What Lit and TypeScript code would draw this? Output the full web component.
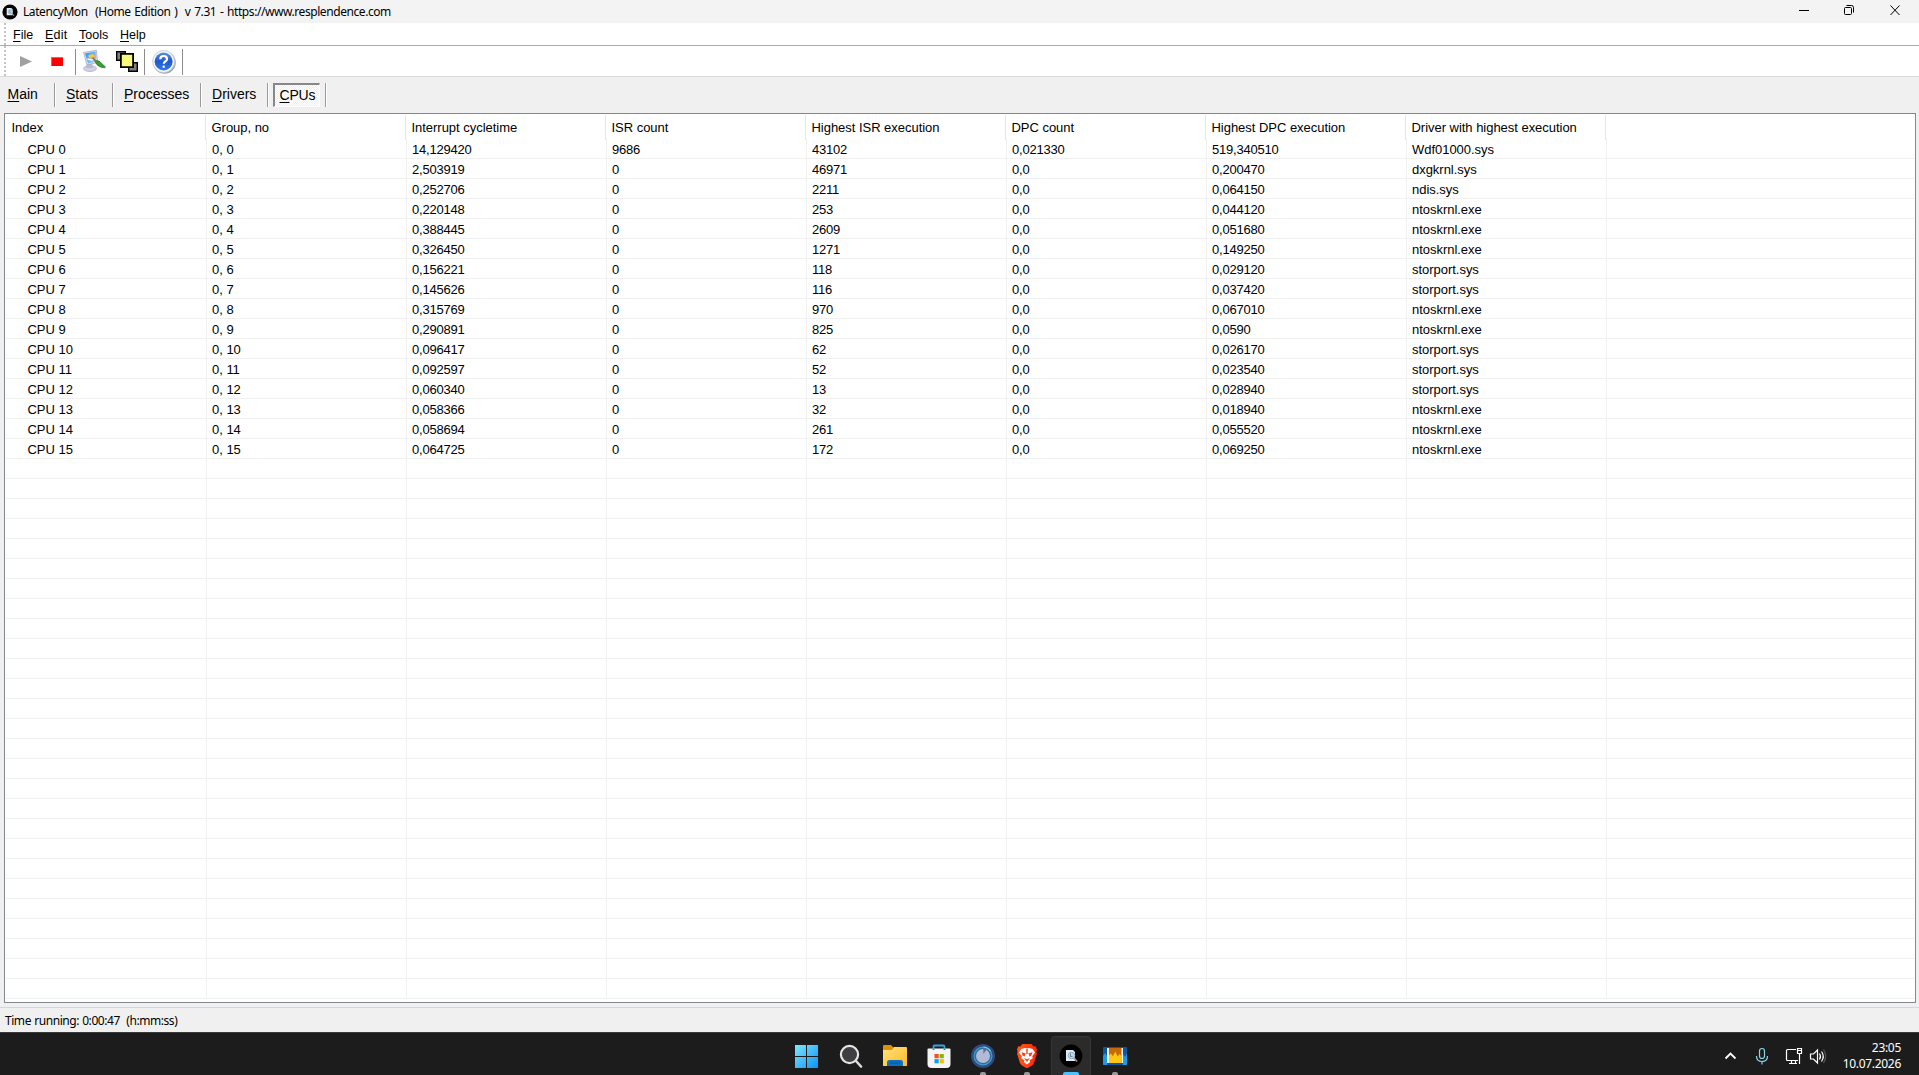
import { LitElement, html, css, svg } from "lit";
import { customElement } from "lit/decorators.js";

const COLUMNS = ["Index", "Group, no", "Interrupt cycletime", "ISR count", "Highest ISR execution", "DPC count", "Highest DPC execution", "Driver with highest execution"];

const ROWS = [
  ["14,129420", "9686", "43102", "0,021330", "519,340510", "Wdf01000.sys"],
  ["2,503919", "0", "46971", "0,0", "0,200470", "dxgkrnl.sys"],
  ["0,252706", "0", "2211", "0,0", "0,064150", "ndis.sys"],
  ["0,220148", "0", "253", "0,0", "0,044120", "ntoskrnl.exe"],
  ["0,388445", "0", "2609", "0,0", "0,051680", "ntoskrnl.exe"],
  ["0,326450", "0", "1271", "0,0", "0,149250", "ntoskrnl.exe"],
  ["0,156221", "0", "118", "0,0", "0,029120", "storport.sys"],
  ["0,145626", "0", "116", "0,0", "0,037420", "storport.sys"],
  ["0,315769", "0", "970", "0,0", "0,067010", "ntoskrnl.exe"],
  ["0,290891", "0", "825", "0,0", "0,0590", "ntoskrnl.exe"],
  ["0,096417", "0", "62", "0,0", "0,026170", "storport.sys"],
  ["0,092597", "0", "52", "0,0", "0,023540", "storport.sys"],
  ["0,060340", "0", "13", "0,0", "0,028940", "storport.sys"],
  ["0,058366", "0", "32", "0,0", "0,018940", "ntoskrnl.exe"],
  ["0,058694", "0", "261", "0,0", "0,055520", "ntoskrnl.exe"],
  ["0,064725", "0", "172", "0,0", "0,069250", "ntoskrnl.exe"],
];

const BLANK_ROWS = 27;

const appGlyph = svg`
  <circle cx="12" cy="12" r="11.4" fill="#000"/>
  <path d="M7 6h7l2 2v9H7z" fill="#dfeaf3"/>
  <circle cx="12.500" cy="11.500" r="3.300" fill="#b9d8ea" stroke="#7fa3bb" stroke-width=".8"/>
  <path d="M11.500 9.500v3h2" stroke="#5f7583" stroke-width=".8" fill="none"/>
  <path d="M15 14l3 3.600" stroke="#b78f74" stroke-width="1.600"/>`;

const startIcon = html`<svg width="24" height="24" viewBox="0 0 24 24">
  <defs><linearGradient id="w" x1="0" y1="0" x2="24" y2="24" gradientUnits="userSpaceOnUse"><stop stop-color="#7fe9ff"/><stop offset="1" stop-color="#0a90f5"/></linearGradient></defs>
  <path fill="url(#w)" d="M0 1h11v11h-11zM12 1h11v11h-11zM0 13h11v11h-11zM12 13h11v11h-11z"/></svg>`;

const searchIcon = html`<svg width="24" height="24" viewBox="0 0 24 24">
  <circle cx="10.500" cy="10.500" r="8.600" fill="#3d3f42" stroke="#e4e4e4" stroke-width="2.200"/>
  <path d="M17 17l5 5.500" stroke="#dcdcdc" stroke-width="2.600" stroke-linecap="round"/></svg>`;

const folderIcon = html`<svg width="24" height="24" viewBox="0 0 24 24">
  <defs><linearGradient id="f" x1="0" y1="0" x2="1" y2="1"><stop stop-color="#ffe27c"/><stop offset="1" stop-color="#fcb924"/></linearGradient></defs>
  <path d="M0 2q0-1 1-1h7l2.500 2.500H15V9H0z" fill="#d9930b"/>
  <path d="M0 6h9l2-3h12q1 0 1 1v18H0z" fill="url(#f)"/>
  <path d="M4 22v-3.500q0-2.500 2.500-2.500h11q2.500 0 2.500 2.500V22z" fill="#0f6fc0"/><path d="M7 19h10" stroke="#0a5aa0" stroke-width="1.200"/></svg>`;

const storeIcon = html`<svg width="24" height="24" viewBox="0 0 24 24">
  <path d="M6.500 6V2.700q0-1.200 1.200-1.200h8.600q1.200 0 1.200 1.200V6" fill="none" stroke="#2aa7ea" stroke-width="1.800"/>
  <path d="M.5 5.500q0-1 1-1h21q1 0 1 1V20q0 4-4 4h-15q-4 0-4-4z" fill="#f4f4f4"/>
  <path d="M5.600 5.200h1.800M16.600 5.200h1.800" stroke="#1b7fc4" stroke-width="1.500"/>
  <path d="M7.500 10h4.200v4.200H7.500z" fill="#f25022"/><path d="M12.600 10h4.200v4.200h-4.200z" fill="#7fba00"/>
  <path d="M7.500 15.100h4.200v4.200H7.500z" fill="#00a4ef"/><path d="M12.600 15.100h4.200v4.200h-4.200z" fill="#ffb900"/></svg>`;

const orbIcon = html`<svg width="24" height="24" viewBox="0 0 24 24">
  <circle cx="12" cy="12" r="12" fill="#2f4a80"/><circle cx="12" cy="12" r="8.900" fill="#38659a" stroke="#3ba0c6" stroke-width="1.200"/>
  <circle cx="12" cy="12" r="7" fill="#b1bbd5"/><path d="M12.300 4v6l3.700-5z" fill="#4b74ab"/>
  <path d="M12.500 3.200a8.700 8.700 0 0 1 7 4" fill="none" stroke="#6ccbe0" stroke-width="1.200"/></svg>`;

const braveIcon = html`<svg width="24" height="24" viewBox="0 0 24 24">
  <defs><linearGradient id="b"><stop stop-color="#ff5a1f"/><stop offset="1" stop-color="#ff2408"/></linearGradient></defs>
  <path fill="url(#b)" d="M7.500 0h9l2.200 2.500 2-.2L22 5.500l-.6 2 .5 2.200L19 19q-.6 1.500-2 2.400L12 24.500l-5-3.100Q5.600 20.500 5 19L2.100 9.700l.5-2.200-.6-2 1.300-3.200 2 .2z"/>
  <path fill="#fff" d="M12 4.500l2-.5 3.700 1L20 8.500l-2.800 3.800.6 2-3.300 2 .7 1.700L12 20.500 8.800 18l.7-1.700-3.300-2 .6-2L4 8.500 6.300 5 10 4z"/>
  <path fill="#ff3f14" d="M6.500 8.200l4 1-.8 3.300-2-.8zM17.500 8.200l-4 1 .8 3.300 2-.8zM9 14l3 1.200 3-1.200-3 4zM11.300 5h1.400v5h-1.400z"/></svg>`;

const chartIcon = html`<svg width="24" height="24" viewBox="0 0 24 24">
  <path d="M0 4q0-1 1-1h22q1 0 1 1v16q0 1-1 1H1q-1 0-1-1z" fill="#0b57a3"/>
  <path d="M0 12l2-3 2 3v9H1q-1 0-1-1zM24 9l-2 4-2-3v11h3q1 0 1-1z" fill="#1b9be6"/>
  <path d="M4 4h16v15H4z" fill="#f1f4f6"/><path d="M6 4h12.500v15H6z" fill="#c96a08"/>
  <path d="M6 19v-7.500l1.500-2 1 1L10 12l2.300-4.500 2.200 5 2-2.500 2 2v7z" fill="#ffc713"/></svg>`;

const APPS = [
  { icon: startIcon, running: false },
  { icon: searchIcon, running: false },
  { icon: folderIcon, running: false },
  { icon: storeIcon, running: false },
  { icon: orbIcon, running: true },
  { icon: braveIcon, running: true },
  { icon: html`<svg width="24" height="24" viewBox="0 0 24 24">${appGlyph}</svg>`, running: true, active: true },
  { icon: chartIcon, running: true },
];

@customElement("app-root")
export class AppRoot extends LitElement {
  static styles = css`
    :host { display: flex; flex-direction: column; width: 1919px; height: 1075px; overflow: hidden; background: #f0f0f0; color: #000; font: 12.500px/20px "Liberation Sans", Arial, sans-serif; }
    * { box-sizing: border-box; }
    svg { display: block; flex: none; }
    u { text-underline-offset: 2px; text-decoration-thickness: 1px; text-decoration-skip-ink: none; }
    .title { height: 23px; background: #f3f3f3; display: flex; align-items: center; padding-left: 2px; font: 12px/23px "Noto Sans", sans-serif; letter-spacing: -.43px; word-spacing: 1px; }
    .caption { margin-left: 5px; white-space: pre; flex: 1; }
    .win { margin-right: 18px; }
    .bars { background: #fff; height: 54px; border-bottom: 1px solid #dadada; display: flex; flex-direction: column; }
    .menu { height: 23px; border-bottom: 1px solid #a9abb0; display: flex; padding-left: 4px; line-height: 24px; }
    .grip { width: 2px; margin-right: 7px; background: repeating-linear-gradient(#c4c4c4 0 2px, #fff 2px 4px); }
    .m0 { width: 32px; } .m1 { width: 34px; letter-spacing: .25px; } .m2 { width: 41px; }
    .tools { height: 30px; padding-left: 4px; display: flex; }
    .tabs { height: 36px; display: flex; font-size: 14px; line-height: 34px; }
    .tab { display: flex; padding-left: 11px; }
    .sep { width: 1px; height: 24px; background: #9a9a9a; margin-top: 6px; margin-left: auto; box-shadow: 1px 0 #fff; }
    .t0 { width: 55px; padding-left: 7.5px; }
    .t1 { width: 58px; }
    .t2 { width: 88px; }
    .t3 { width: 67px; }
    .on { margin: 6px 5px 0 5px; width: 47px; height: 24px; padding-left: 4.5px; line-height: 20px; letter-spacing: -.2px; border: 1px solid #fff; border-top: 2px solid #888; border-left: 2px solid #888; background: repeating-conic-gradient(#f0f0f0 0 25%, #fff 0 50%) 0 0 / 2px 2px; }
    .end { margin-left: 0; }
    .list { height: 890px; margin: 0 3px 0 4px; background: #fff; border: 1px solid #828790; padding: 1px; font-size: 13px; overflow: hidden; letter-spacing: -.03px; }
    .head, .row { display: grid; grid-template-columns: 200px repeat(7, 200px) 1fr; }
    .head { height: 24px; line-height: 25px; }
    .cell { padding-left: 5.5px; border-right: 1px solid #e5e5e5; white-space: pre; }
    .row { height: 20px; border-bottom: 1px solid #f0f0f0; grid-template-columns: 201px repeat(7, 200px) 1fr; }
    .row .cell { padding-left: 5px; border-right-color: #f0f0f0; line-height: 21px; height: 19px; }
    .row .num { letter-spacing: -.22px; }
    .row .cell:first-child { padding-left: 21.5px; }
    .cell:last-child, .row .cell:last-child { border-right: 0; }
    .stat { margin-top: 4px; height: 25px; border-top: 1px solid #d7d7d7; padding-left: 5px; font: 12px/25px "Noto Sans", sans-serif; letter-spacing: -.45px; word-spacing: .6px; white-space: pre; }
    .task { height: 43px; background: #1c1c1c; border-top: 1px solid #3a3a3a; display: flex; color: #fff; }
    .apps { display: flex; margin-left: 785px; }
    .app { width: 44px; height: 42px; display: flex; flex-direction: column; align-items: center; padding-top: 11px; }
    .dot { width: 6px; height: 3px; border-radius: 2px 2px 0 0; background: #999; margin-top: 4px; }
    .active { background: #2b2b2b; border-radius: 4px 4px 0 0; width: 40px; height: 39px; margin: 3px 2px 0; padding-top: 7px; border: 1px solid #363636; border-bottom: 0; }
    .active .dot { width: 16px; background: #4cc2ff; }
    .tray { margin-left: auto; display: flex; }
    .clock { width: 72px; margin-right: 18px; padding-top: 7px; text-align: right; font: 12px/16px "Noto Sans", sans-serif; letter-spacing: -.3px; }
  `;

  render() {
    return html`
      <div class="title">
        <svg width="16" height="16" viewBox="0 0 24 24">${appGlyph}</svg>
        <span class="caption">LatencyMon  (Home Edition )  v 7.31 - https://www.resplendence.com</span>
        <svg class="win" width="107" height="20" viewBox="0 0 107 20" fill="none" stroke="#000"><path d="M5 8.500h10"/><rect x="50.500" y="5.500" width="7" height="7" rx="1"/><path d="M52.500 3.500h5q2 0 2 2v5M96.500 3.500l9 9.500M105.500 3.500l-9 9.500"/></svg>
      </div>
      <div class="bars">
        <div class="menu">
          <div class="grip"></div>
          <span class="m0"><u>F</u>ile</span><span class="m1"><u>E</u>dit</span><span class="m2"><u>T</u>ools</span><span><u>H</u>elp</span>
        </div>
        <div class="tools">
          <div class="grip"></div>
          <svg width="175" height="30" viewBox="13 46 175 30">
            <defs>
              <linearGradient id="scr" x1="0" y1="0" x2="1" y2="1"><stop stop-color="#2f8fe6"/><stop offset="1" stop-color="#8fe0ff"/></linearGradient>
              <linearGradient id="hlp" x1="0" y1="0" x2="0" y2="1"><stop stop-color="#5a8fe6"/><stop offset=".5" stop-color="#2059cf"/><stop offset="1" stop-color="#2f7be8"/></linearGradient>
              <pattern id="chk" width="2" height="2" patternUnits="userSpaceOnUse"><path d="M0 0h2v2H0z" fill="#ffff10"/><path d="M0 0h1v1H0zM1 1h1v1H1z" fill="#ffff80"/></pattern>
            </defs>
            <path d="M20 56l12 5.500-12 5.500z" fill="#a0a0a0"/>
            <path d="M51 57h12v9H51z" fill="#9a8080"/><path d="M52 58h11v8H52z" fill="#f00"/>
            <path d="M75.500 49v26M144.500 49v26M182.500 49v26" stroke="#8c8c8c"/>
            <ellipse cx="90" cy="68.500" rx="6.500" ry="3" fill="#d2d2e4" stroke="#a6a6be" stroke-width=".7"/>
            <path d="M87 63h5l1 5h-7z" fill="#b9b9d0"/>
            <path d="M83.500 52.500l13-2.300 1 12.300-10.500 2.500z" fill="#dcdcea" stroke="#a2a2bd" stroke-width=".7"/>
            <path d="M85 53.500l10.500-2 .8 10-8.300 2z" fill="url(#scr)"/>
            <path d="M88 55.500l5-2 2 3-5 2.500z" fill="#f6c34c"/><path d="M87.500 59l4 1 3-1" stroke="#fff" fill="none" stroke-width="1.300"/>
            <path d="M95 60.500l4 .5 6.500 6-1 .8q-6-.3-8.500-4.300z" fill="#35a32b" stroke="#1d6d1b" stroke-width=".7"/><path d="M92.500 57.500l3.500 4" stroke="#b06a2c" stroke-width="1.600"/>
            <path d="M116.700 51.700h8.600v8.600h-8.600z" fill="#808080" stroke="#000" stroke-width="1.400"/>
            <path d="M128.700 62.700h8.600v8.600h-8.600z" fill="#808080" stroke="#000" stroke-width="1.400"/>
            <path d="M120.900 53.900h12.200v13.200h-12.200z" fill="url(#chk)" stroke="#000" stroke-width="1.800"/>
            <circle cx="164.500" cy="62.500" r="11.300" fill="#9fa3ad"/><circle cx="163.600" cy="61.500" r="11" fill="#f4f6fa" stroke="#bfc4cf" stroke-width=".8"/>
            <circle cx="163.600" cy="61.500" r="9" fill="url(#hlp)"/>
            <path d="M160.300 59.200q0-3.200 3.400-3.200 3.300 0 3.300 2.900 0 1.600-1.800 2.600-1.400.8-1.400 2.300M163.700 65.500v2.200" stroke="#fff" stroke-width="2.200" fill="none"/>
          </svg>
        </div>
      </div>
      <div class="tabs">
        <div class="tab t0"><span><u>M</u>ain</span><i class="sep"></i></div>
        <div class="tab t1"><span><u>S</u>tats</span><i class="sep"></i></div>
        <div class="tab t2"><span><u>P</u>rocesses</span><i class="sep"></i></div>
        <div class="tab t3"><span><u>D</u>rivers</span><i class="sep"></i></div>
        <div class="on"><u>C</u>PUs</div><i class="sep end"></i>
      </div>
      <div class="list">
        <div class="head">${COLUMNS.map((c) => html`<span class="cell">${c}</span>`)}<span class="cell"></span></div>
        ${ROWS.map((r, i) => html`<div class="row"><span class="cell">CPU ${i}</span><span class="cell">0, ${i}</span>${r.map((v, k) => html`<span class="cell ${k < 5 ? "num" : ""}">${v}</span>`)}<span class="cell"></span></div>`)}
        ${Array.from({ length: BLANK_ROWS }, () => html`<div class="row">${Array.from({ length: 9 }, () => html`<span class="cell"></span>`)}</div>`)}
      </div>
      <div class="stat">Time running: 0:00:47  (h:mm:ss)</div>
      <div class="task">
        <div class="apps">
          ${APPS.map((a) => html`<div class="app ${a.active ? "active" : ""}">${a.icon}${a.running ? html`<i class="dot"></i>` : ""}</div>`)}
        </div>
        <div class="tray">
          <svg width="110" height="42" viewBox="1720 1033 110 42" fill="none" stroke="#fff" stroke-width="1.200">
            <path d="M1726.500 1058.500l5-5 5 5" stroke-width="1.800"/>
            <g stroke="#8ad4e6"><rect x="1760.500" y="1048.500" width="5" height="10" rx="2.500"/><path d="M1757.500 1056q0 5.500 5.500 5.500t5.500-5.500M1763 1061.500v3"/></g>
            <path d="M1797 1049.500h-8.500q-1 0-1 1v9q0 1 1 1h10.500M1790 1063.500h8M1792.500 1060.500v3M1796.500 1060.500v3"/>
            <path d="M1798.500 1048.500h4v5h-4zM1800.500 1053.500v10.500M1798.500 1050.500h4"/>
            <path d="M1811.500 1054h3l4-4v13l-4-4h-3z"/><path d="M1820.500 1053.500q2 3 0 6M1822.500 1051.500q3.500 5 0 10"/><path d="M1824.500 1049.500q4.500 7 0 13.500" stroke="#555"/>
          </svg>
          <div class="clock">23:05<br>10.07.2026</div>
        </div>
      </div>
    `;
  }
}
